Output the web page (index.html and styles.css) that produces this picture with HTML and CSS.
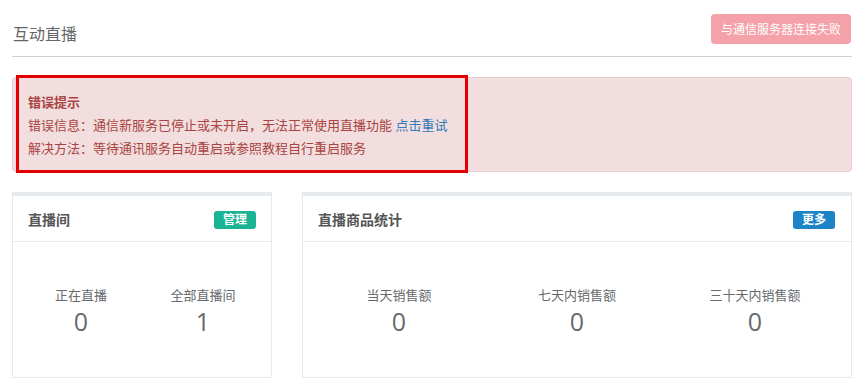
FILE: index.html
```html
<!DOCTYPE html>
<html lang="zh-CN">
<head>
    <meta charset="UTF-8">
    <title>互动直播</title>
    <link rel="stylesheet" href="styles.css">
</head>
<body>

<div class="page">

    <div class="page-head">
        <h2 class="page-title">互动直播</h2>
        <button class="btn-fail" disabled>与通信服务器连接失败</button>
    </div>

    <div class="alert">
        <div class="alert-mark"></div>
        <b>错误提示</b>
        <p>错误信息：通信新服务已停止或未开启，无法正常使用直播功能 <a href="#">点击重试</a></p>
        <p>解决方法：等待通讯服务自动重启或参照教程自行重启服务</p>
    </div>

    <div class="boxes">
        <div class="ibox">
            <div class="ibox-title">
                <h5>直播间</h5>
                <span class="label label-green">管理</span>
            </div>
            <div class="ibox-content cols-2">
                <div class="stat"><span>正在直播</span><strong>0</strong></div>
                <div class="stat"><span>全部直播间</span><strong>1</strong></div>
            </div>
        </div>

        <div class="ibox">
            <div class="ibox-title">
                <h5>直播商品统计</h5>
                <span class="label label-blue">更多</span>
            </div>
            <div class="ibox-content cols-3">
                <div class="stat"><span>当天销售额</span><strong>0</strong></div>
                <div class="stat"><span>七天内销售额</span><strong>0</strong></div>
                <div class="stat"><span>三十天内销售额</span><strong>0</strong></div>
            </div>
        </div>
    </div>

</div>

</body>
</html>
```

FILE: styles.css
```css
body { margin: 0; background: #fff; font-family: "Open Sans", "Noto Sans CJK SC", sans-serif; font-size: 13px; color: #676a6c; }

.page { padding: 0 6px 0 12px; }

.page-head { display: flex; justify-content: space-between; align-items: flex-start; height: 42px; padding-top: 14px; border-bottom: 1px solid #d2d2d2; }
.page-title { margin: 10px 0 0 1px; font-size: 16px; line-height: 20px; font-weight: normal; color: #666; }
.btn-fail { height: 30px; margin-right: 1px; padding: 0 10px; border: 0; border-radius: 4px; background: #f4a1a9; color: #fff; font-family: inherit; font-size: 12px; }

.alert { position: relative; margin-top: 20px; padding: 13px 15px 11px; border: 1px solid #ebccd1; border-radius: 4px; background: #f2dede; color: #a94442; line-height: 23px; }
.alert b { display: block; font-weight: bold; }
.alert p { margin: 0; }
.alert a { color: #337ab7; text-decoration: none; }
.alert-mark { position: absolute; left: 3px; top: -3px; width: 452px; height: 98px; box-sizing: border-box; border: 3px solid #e40000; }

.boxes { display: grid; grid-template-columns: 260px 1fr; gap: 30px; margin-top: 20px; }

.ibox { border: 1px solid #e7eaec; border-top: 4px solid #e7eaec; }
.ibox-title { display: flex; justify-content: space-between; align-items: center; height: 45px; padding: 0 15px 0 15px; border-bottom: 1px solid #e7eaec; }
.ibox-title h5 { margin: 0; font-size: 14px; font-weight: bold; color: #555; }

.label { padding: 0 9px; border-radius: 3px; color: #fff; font-size: 12px; font-weight: bold; line-height: 18px; margin-top: 3px; }
.label-green { background: #1ab394; }
.label-blue  { background: #1c84c6; margin-right: 1px; }

.ibox-content { display: grid; padding: 44px 7px 43px; }
.cols-2 { grid-template-columns: 1fr 1fr; }
.cols-3 { grid-template-columns: 1fr 1fr 1fr; }

.stat { display: flex; flex-direction: column; align-items: center; }
.stat span { font-size: 13px; line-height: 18px; color: #676a6c; }
.stat strong { margin-top: 4px; font-size: 25px; line-height: 26px; font-weight: normal; color: #676a6c; }
```
